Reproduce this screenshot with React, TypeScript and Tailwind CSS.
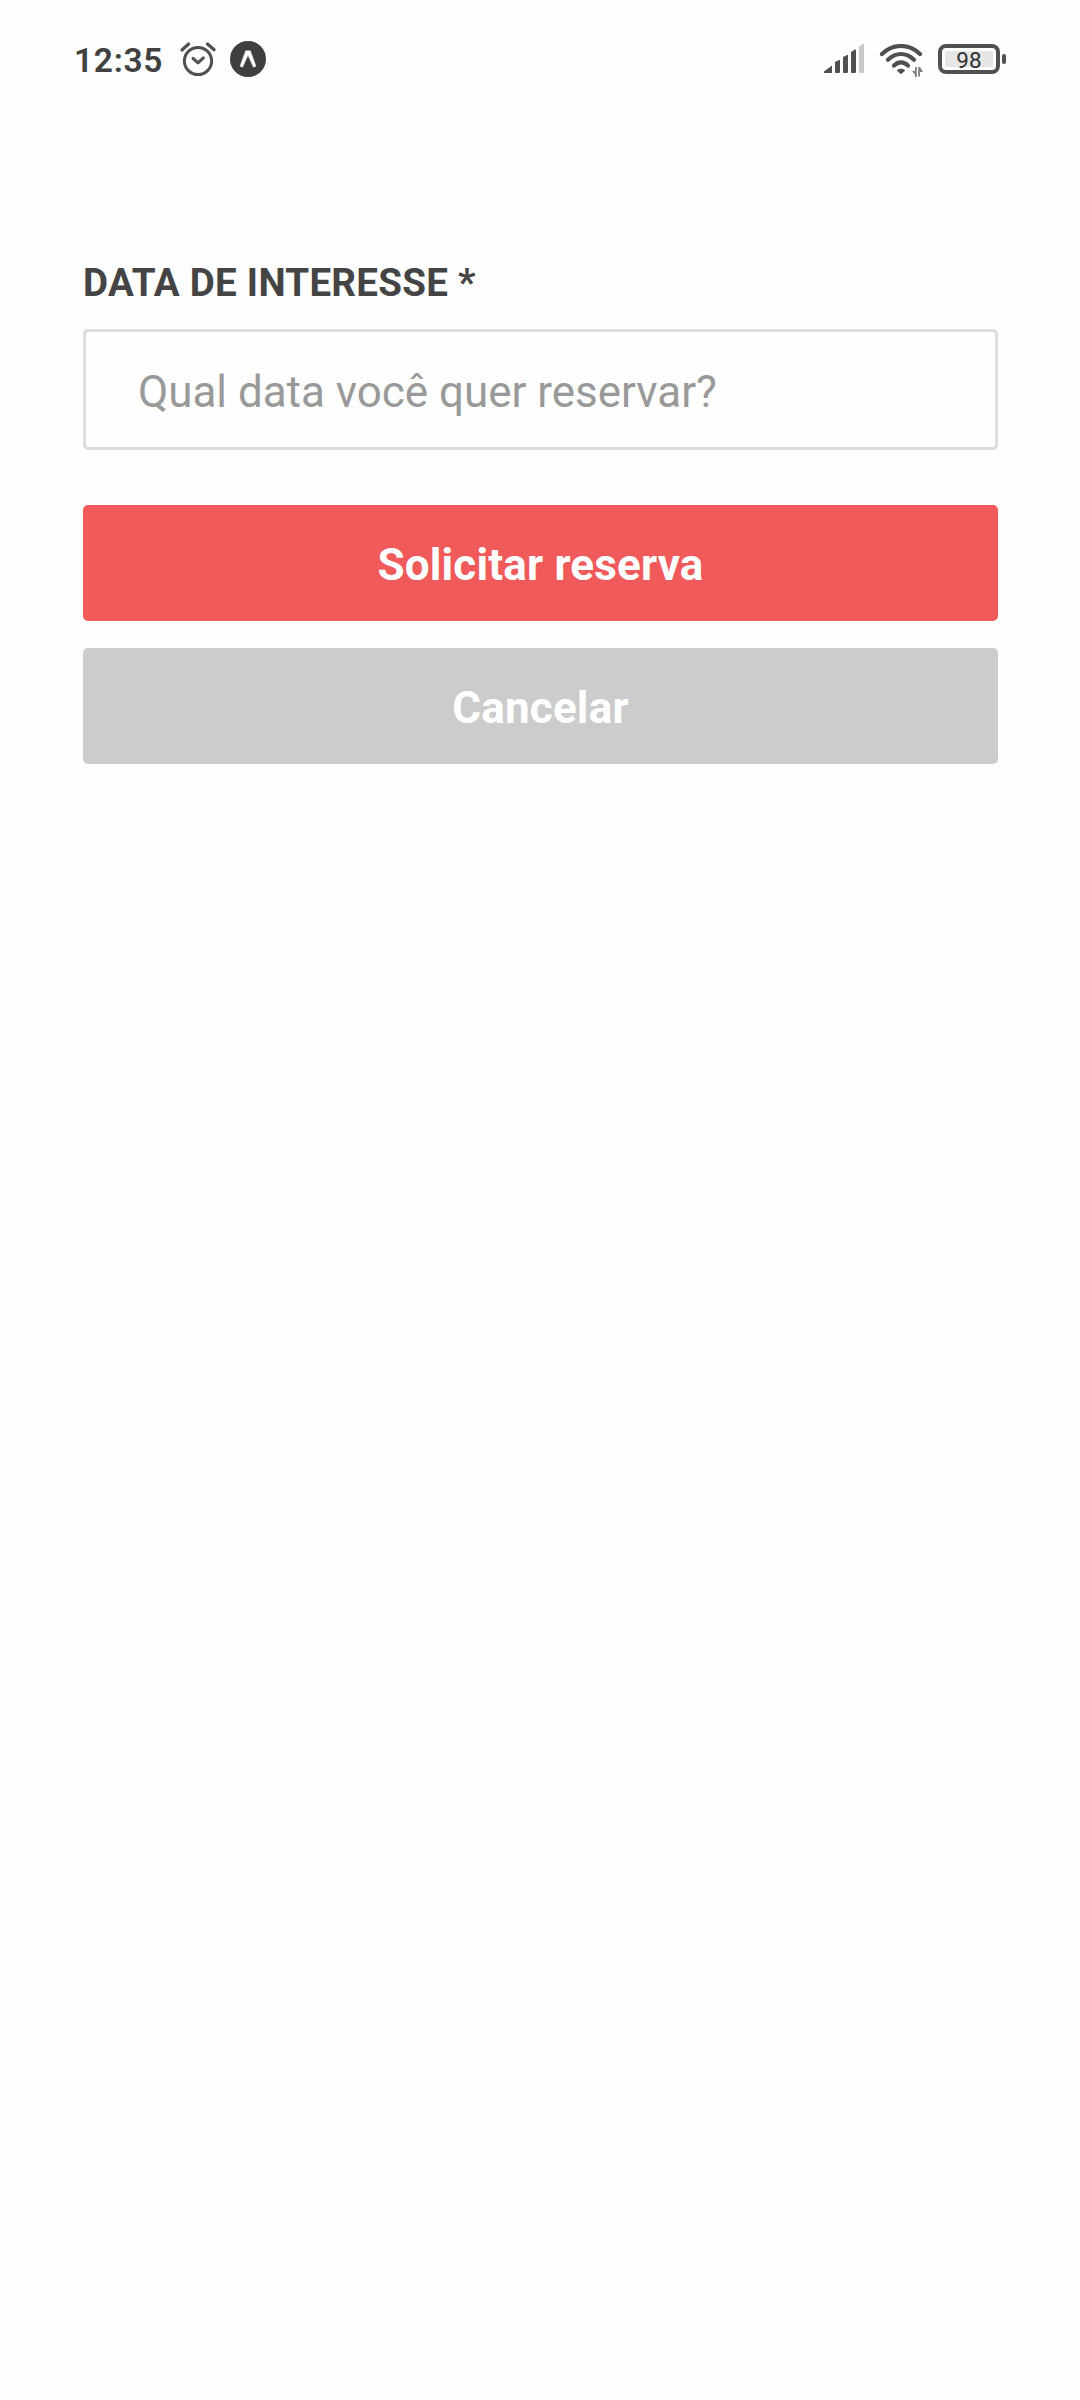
function AlarmIcon() {
  return (
    <svg className="ml-[17px] h-[38px] w-[38px] shrink-0" viewBox="179 40 38 38" fill="none" stroke="#505050" strokeLinecap="round" strokeLinejoin="round">
      <circle cx="198" cy="61" r="13.600" strokeWidth="3" />
      <path d="M193 58.300l5 4.600 5.400-5" strokeWidth="3" />
      <path d="M182 50l6.600-6M207.500 44l6.600 5.800" strokeWidth="3.200" />
    </svg>
  );
}

function ExpoIcon() {
  return (
    <svg className="ml-[13px] h-[36px] w-[36px] shrink-0" viewBox="0 0 36 36">
      <circle cx="18" cy="18" r="18" fill="#3f3f3f" />
      <path d="M10 25.200L15.600 9.800h4.800L26 25.200l-2.600 1L18 14.200l-5.400 12z" fill="#fff" strokeLinejoin="round" stroke="#fff" strokeWidth="0.400" />
    </svg>
  );
}

function SignalIcon() {
  return (
    <svg className="h-[30px] w-[40px] shrink-0" viewBox="824 44 40 30" fill="#505050">
      <path d="M824 71.500L832 65.600V73H825.200A1.200 1.200 0 0 1 824 71.500z" />
      <path d="M835 62l4-2h1v12a1 1 0 0 1-1 1h-3a1 1 0 0 1-1-1z" />
      <path d="M843 57l4-2h1v17a1 1 0 0 1-1 1h-3a1 1 0 0 1-1-1z" />
      <path d="M851 52l4-2.500h1V72a1 1 0 0 1-1 1h-3a1 1 0 0 1-1-1z" />
      <path d="M859 46.500l3.500-2.500h1.500v28a1 1 0 0 1-1 1h-3a1 1 0 0 1-1-1z" fill="#c8c8c8" />
    </svg>
  );
}

function WifiIcon() {
  return (
    <svg className="ml-[15px] h-[34px] w-[44px] shrink-0" viewBox="879 44 44 34" fill="none" stroke="#505050" strokeWidth="4.200" strokeLinecap="round">
      <path d="M882 54Q890.500 46 901 46T920 54" />
      <path d="M888 59.800Q894 54 901 54T914 59.800" />
      <path d="M894 65.600Q897 62.300 901 62.300T908 65.600" />
      <path d="M897.800 70.400q3.200-2 6.400 0l-3.200 2.900z" fill="#505050" strokeWidth="1.500" strokeLinejoin="round" />
      <path d="M915 67h1.800v10H915v-2l-3-4h3zM918.200 67h1.800l3 5h-3v4.500h-1.800z" fill="#808080" stroke="none" />
    </svg>
  );
}

function Battery() {
  return (
    <div className="ml-[15px] flex shrink-0 items-center gap-[2px]">
      <div className="h-[30px] w-[62px] rounded-[8px] border-4 border-[#505050] p-[3px]">
        <div className="flex h-full items-center justify-center rounded-[2px] bg-[#e6e6e6] text-[22.500px] leading-none font-normal text-[#303030]">
          <span className="relative top-[1px]">98</span>
        </div>
      </div>
      <div className="h-[10px] w-[4px] rounded-[2px] bg-[#505050]" />
    </div>
  );
}

export default function App() {
  return (
    <div className="min-h-[2400px] w-[1080px] bg-[#fefefe] font-['Roboto',sans-serif]">
      <header className="flex h-[118px] items-start justify-between pr-[74px] pl-[74px]">
        <div className="flex pt-[40px]">
          <span className="w-[88px] pt-[1px] text-[33.500px] leading-[40px] font-semibold tracking-[0.700px] whitespace-nowrap text-[#404040]">12:35</span>
          <AlarmIcon />
          <div className="pt-[1px]">
            <ExpoIcon />
          </div>
        </div>
        <div className="flex items-start pt-[44px]">
          <SignalIcon />
          <WifiIcon />
          <Battery />
        </div>
      </header>
      <main className="flex flex-col pr-[82px] pl-[83px] pt-[142px]">
        <label htmlFor="date" className="text-[38.500px] leading-[45px] font-bold tracking-[0.270px] whitespace-nowrap text-[#444]">
          DATA DE INTERESSE *
        </label>
        <input
          id="date"
          type="text"
          placeholder="Qual data você quer reservar?"
          className="mt-[24px] h-[121px] w-full rounded-[5px] border-3 border-[#ddd] bg-[#fefefe] px-[52px] pt-[5px] text-[44px] tracking-[-0.030px] outline-none placeholder:text-[#999] placeholder:opacity-100"
        />
        <button className="mt-[55px] h-[116px] w-full rounded-[5px] bg-[#f05a5b] pt-[4px] text-[44px] leading-[52px] font-bold tracking-[0.180px] text-white">Solicitar reserva</button>
        <button className="mt-[27px] h-[116px] w-full rounded-[5px] bg-[#ccc] pt-[4px] text-[44px] leading-[52px] font-bold tracking-[0.180px] text-white">Cancelar</button>
      </main>
    </div>
  );
}
